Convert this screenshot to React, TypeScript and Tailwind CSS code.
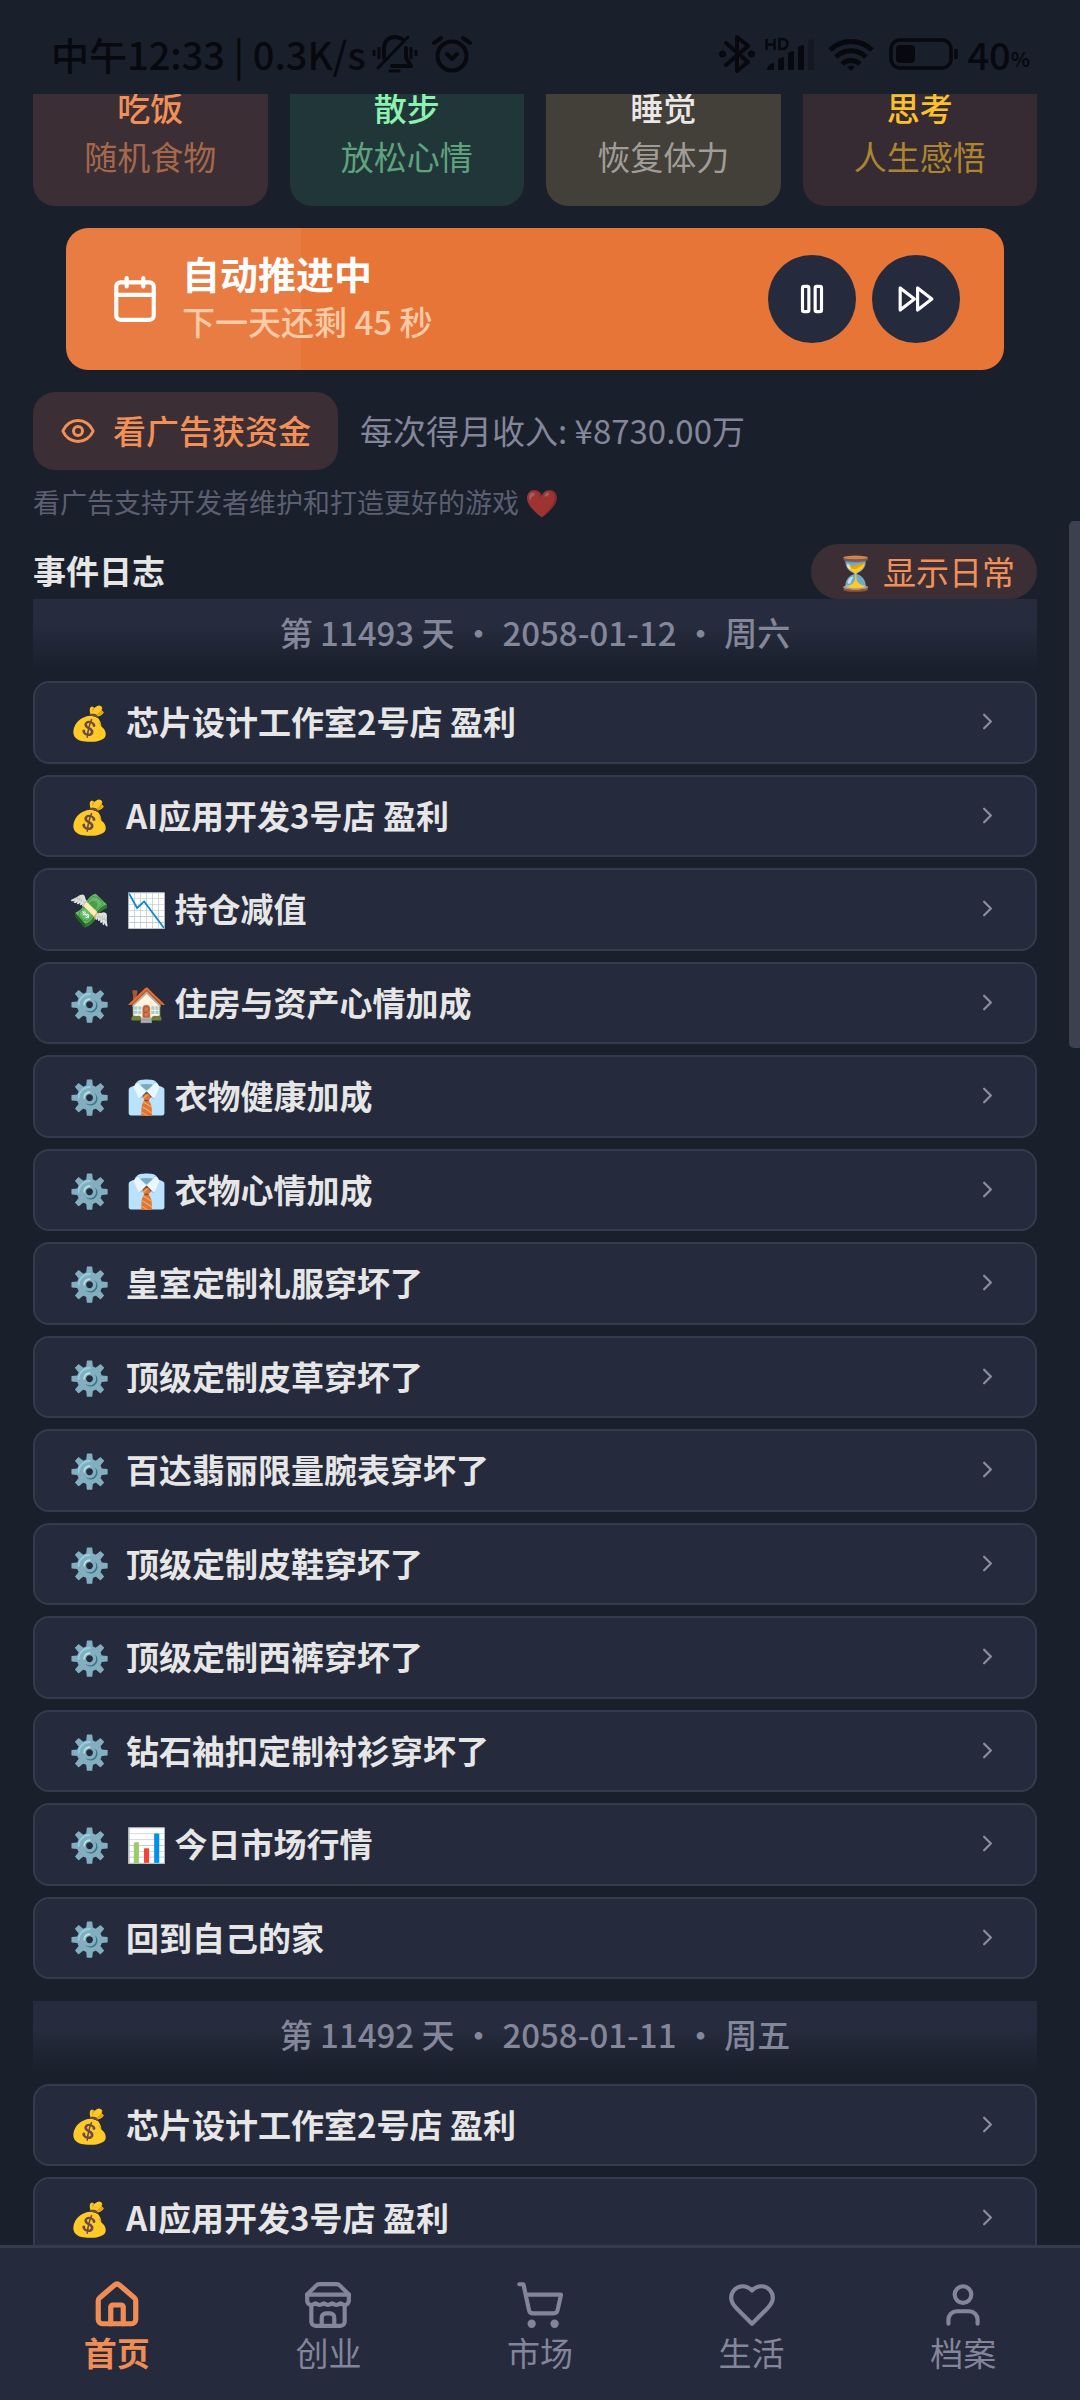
import { useState } from "react";
import { Calendar, ChevronRight, Eye } from "lucide-react";

const actions = [
  { title: "吃饭", hint: "随机食物", box: "bg-[#3b2e34] text-[#f29058]", sub: "text-[#a4694c]" },
  { title: "散步", hint: "放松心情", box: "bg-[#213639] text-[#8cf2b0]", sub: "text-[#5fa37d]" },
  { title: "睡觉", hint: "恢复体力", box: "bg-[#434039] text-[#ebe7e6]", sub: "text-[#a09d99]" },
  { title: "思考", hint: "人生感悟", box: "bg-[#362b32] text-[#fbc02d]", sub: "text-[#ab8530]" },
];

const days = [
  {
    label: "第 11493 天 • 2058-01-12 • 周六",
    events: [
      { icon: "💰", text: "芯片设计工作室2号店 盈利" },
      { icon: "💰", text: "AI应用开发3号店 盈利" },
      { icon: "💸", text: "📉 持仓减值" },
      { icon: "⚙️", text: "🏠 住房与资产心情加成" },
      { icon: "⚙️", text: "👔 衣物健康加成" },
      { icon: "⚙️", text: "👔 衣物心情加成" },
      { icon: "⚙️", text: "皇室定制礼服穿坏了" },
      { icon: "⚙️", text: "顶级定制皮草穿坏了" },
      { icon: "⚙️", text: "百达翡丽限量腕表穿坏了" },
      { icon: "⚙️", text: "顶级定制皮鞋穿坏了" },
      { icon: "⚙️", text: "顶级定制西裤穿坏了" },
      { icon: "⚙️", text: "钻石袖扣定制衬衫穿坏了" },
      { icon: "⚙️", text: "📊 今日市场行情" },
      { icon: "⚙️", text: "回到自己的家" },
    ],
  },
  {
    label: "第 11492 天 • 2058-01-11 • 周五",
    events: [
      { icon: "💰", text: "芯片设计工作室2号店 盈利" },
      { icon: "💰", text: "AI应用开发3号店 盈利" },
    ],
  },
];

const tabs = [
  {
    name: "首页",
    shape: (
      <>
        <path d="M15 21v-8a1 1 0 0 0-1-1h-4a1 1 0 0 0-1 1v8" />
        <path d="M3 10a2 2 0 0 1 .709-1.528l7-5.999a2 2 0 0 1 2.582 0l7 5.999A2 2 0 0 1 21 10v9a2 2 0 0 1-2 2H5a2 2 0 0 1-2-2z" />
      </>
    ),
  },
  {
    name: "创业",
    shape: (
      <>
        <path d="m2 7 4.41-4.41A2 2 0 0 1 7.83 2h8.34a2 2 0 0 1 1.42.59L22 7" />
        <path d="M4 12v8a2 2 0 0 0 2 2h12a2 2 0 0 0 2-2v-8" />
        <path d="M15 22v-4a2 2 0 0 0-2-2h-2a2 2 0 0 0-2 2v4" />
        <path d="M2 7h20" />
        <path d="M22 7v3a2 2 0 0 1-2 2a2.7 2.7 0 0 1-1.59-.63.7.7 0 0 0-.82 0A2.7 2.7 0 0 1 16 12a2.7 2.7 0 0 1-1.59-.63.7.7 0 0 0-.82 0A2.7 2.7 0 0 1 12 12a2.7 2.7 0 0 1-1.59-.63.7.7 0 0 0-.82 0A2.7 2.7 0 0 1 8 12a2.7 2.7 0 0 1-1.59-.63.7.7 0 0 0-.82 0A2.7 2.7 0 0 1 4 12a2 2 0 0 1-2-2V7" />
      </>
    ),
  },
  {
    name: "市场",
    shape: (
      <>
        <circle cx="8" cy="21" r="1" />
        <circle cx="19" cy="21" r="1" />
        <path d="M2.05 2.05h2l2.66 12.42a2 2 0 0 0 2 1.58h9.78a2 2 0 0 0 1.95-1.57l1.65-7.43H5.12" />
      </>
    ),
  },
  {
    name: "生活",
    shape: (
      <path d="M19 14c1.49-1.46 3-3.21 3-5.5A5.5 5.5 0 0 0 16.5 3c-1.76 0-3 .5-4.5 2-1.5-1.5-2.74-2-4.5-2A5.5 5.5 0 0 0 2 8.5c0 2.3 1.5 4.05 3 5.5l7 7Z" />
    ),
  },
  {
    name: "档案",
    shape: (
      <>
        <path d="M19 21v-2a4 4 0 0 0-4-4H9a4 4 0 0 0-4 4v2" />
        <circle cx="12" cy="7" r="4" />
      </>
    ),
  },
];

function StatusBar() {
  return (
    <header className="flex h-[94px] shrink-0 items-center justify-between pt-[13px] pr-[50px] pl-[51px] text-[38px] font-medium text-[#07090e]">
      <div className="flex items-center">
        <span className="mr-[6px] whitespace-nowrap">中午12:33 | 0.3K/s</span>
        {/* muted bell */}
        <svg className="mr-[14px] h-[40px] w-[46px]" viewBox="0 0 46 40" fill="none" stroke="currentColor" strokeWidth="4" strokeLinecap="round" strokeLinejoin="round">
          <path d="M12 24V14C12 7 17 3 23 3c3 0 5 1 7 2M34 14v10l5 8H20" />
          <path d="M36 3 6 34" strokeWidth="3" />
          <path d="M18 37h9" strokeWidth="3" />
          <path d="M2 16v6M7 13v12M39 13v12M44 16v6" strokeWidth="3" strokeLinecap="butt" />
        </svg>
        <svg className="h-[40px] w-[40px]" viewBox="0 0 40 40" fill="none" stroke="currentColor" strokeWidth="4" strokeLinecap="round" strokeLinejoin="round">
          <circle cx="20" cy="22" r="14.5" />
          <path d="m15 20 5 5 5-5M2 9l7-5M38 9l-7-5" />
        </svg>
      </div>
      <div className="flex items-center">
        <svg className="mr-[10px] h-[40px] w-[36px]" viewBox="0 0 36 40" fill="none" stroke="currentColor" strokeWidth="4" strokeLinejoin="round" strokeLinecap="round">
          <path d="m7 9 22 19-11 9V3l11 9L7 31" />
          <circle cx="3.5" cy="20" r="1.5" />
          <circle cx="32.5" cy="20" r="1.5" />
        </svg>
        {/* HD + signal */}
        <svg className="mr-[13px] h-[36px] w-[50px]" viewBox="0 0 50 36" fill="currentColor">
          <path d="M1.5 3v11M9.500 3v11M1.5 8.500h8M14.500 3v10h3a5 5 0 0 0 0-10z" fill="none" stroke="currentColor" strokeWidth="2.6" />
          <path d="M2 34q0-6 7-7v7zM13 34V24q0-2 6-3v13zM23 34V18q0-2 6-3v19zM33 34V12q0-2 6-3v25z" />
          <path d="M43 34V6q0-2 6-3v31z" opacity="0.3" />
        </svg>
        <svg className="mr-[15px] h-[36px] w-[46px]" viewBox="0 0 46 36" fill="none" stroke="currentColor" strokeWidth="5">
          <path d="M2 14a30 30 0 0 1 42 0M8 21a21 21 0 0 1 30 0M14 28a13 13 0 0 1 18 0" />
          <path d="M19 31a6 6 0 0 1 8 0l-4 4z" fill="currentColor" stroke="none" />
        </svg>
        <svg className="mr-[8px] h-[32px] w-[70px]" viewBox="0 0 70 32" fill="none" stroke="currentColor" strokeWidth="3.5">
          <rect x="2" y="2" width="60" height="28" rx="9" />
          <rect x="7" y="7" width="19" height="18" rx="4" fill="currentColor" stroke="none" />
          <path d="M67 11v10" />
        </svg>
        <span>40</span>
        <span className="pt-[10px] text-[20px] font-bold">%</span>
      </div>
    </header>
  );
}

export default function App() {
  const [activeTab, setActiveTab] = useState("首页");
  const [paused, setPaused] = useState(false);

  return (
    <div className="relative flex h-screen flex-col overflow-hidden bg-[#1a1f2c] font-['Noto_Sans_CJK_SC','Noto_Sans',sans-serif] text-[33px] leading-normal text-[#e6e6e6]">
      <StatusBar />

      <main className="min-h-0 flex-1 overflow-hidden pr-[43px] pl-[33px]">
        {/* quick actions, scrolled partly under the status bar */}
        <div className="-mt-[33px] grid grid-cols-4 gap-[22px]">
          {actions.map((a) => (
            <button key={a.title} className={`flex flex-col items-center rounded-[22px] pt-[22px] pb-[25px] leading-[49px] ${a.box}`}>
              <span className="font-medium">{a.title}</span>
              <span className={a.sub}>{a.hint}</span>
            </button>
          ))}
        </div>

        <section className="relative mx-[33px] mt-[22px] flex items-center overflow-hidden rounded-[22px] bg-[#e87538] px-[44px] py-[20px] text-white">
          <div className="absolute inset-y-0 left-0 w-1/4 bg-white/5" />
          <Calendar className="relative size-[50px]" />
          <div className="relative ml-[22px] flex-1 pb-[6px]">
            <h2 className="text-[38px] leading-[50px] font-bold">自动推进中</h2>
            <p className="leading-[46px] font-medium text-[#fbcba8]">下一天还剩 45 秒</p>
          </div>
          <div className="relative flex gap-[16px]">
            <button
              aria-label="暂停"
              className="flex size-[88px] items-center justify-center rounded-full bg-[#252a3c]"
              onClick={() => setPaused(!paused)}
            >
              <svg className="size-[38px]" viewBox="0 0 24 24" fill="none" stroke="currentColor" strokeWidth="2" strokeLinejoin="round">
                <rect x="6" y="4" width="4" height="16" rx="1" />
                <rect x="14" y="4" width="4" height="16" rx="1" />
              </svg>
            </button>
            <button aria-label="快进" className="flex size-[88px] items-center justify-center rounded-full bg-[#252a3c]">
              <svg className="size-[38px]" viewBox="0 0 24 24" fill="none" stroke="currentColor" strokeWidth="2" strokeLinejoin="round">
                <path d="m13 19 9-7-9-7zM2 19l9-7-9-7z" />
              </svg>
            </button>
          </div>
        </section>

        <div className="mt-[22px] flex items-center gap-[22px]">
          <button className="flex items-center gap-[17px] rounded-[22px] bg-[#3b2e34] px-[27px] py-[14px] font-medium text-[#f29058]">
            <Eye className="size-[36px]" />
            看广告获资金
          </button>
          <span className="text-[#84869a]">每次得月收入: ¥8730.00万</span>
        </div>
        <p className="mt-[11px] text-[27px] leading-[41px] text-[#5c5f71]">
          看广告支持开发者维护和打造更好的游戏 <span className="opacity-60">❤️</span>
        </p>

        <div className="mt-[22px] flex items-center justify-between">
          <h2 className="font-bold">事件日志</h2>
          <button className="rounded-full bg-[#3b2e34] pr-[22px] pl-[24px] leading-[55px] text-[#f29058]">⏳ 显示日常</button>
        </div>

        {days.map((day) => (
          <section key={day.label} className="mb-[22px]">
            <h3 className="mb-[11px] bg-linear-to-b from-[#262b3d] from-40% to-[#1a1f2c] pt-[9px] pb-[13px] text-center font-medium text-[#84869a]">
              {day.label}
            </h3>
            <ul className="flex flex-col gap-[11px]">
              {day.events.map((e) => (
                <li key={e.text}>
                  <button className="flex w-full items-center rounded-[16px] border-2 border-[#353b4b] bg-[#252a3c] px-[34px] pt-[14px] pb-[15px] text-left">
                    <span className="mr-[16px]">{e.icon}</span>
                    <span className="flex-1 font-bold">{e.text}</span>
                    <ChevronRight className="size-[27px] text-[#8a8ca0]" />
                  </button>
                </li>
              ))}
            </ul>
          </section>
        ))}
      </main>

      {/* scroll thumb */}
      <div className="absolute top-[521px] right-0 h-[527px] w-[11px] rounded-l-[5px] bg-[#3d404f]" />

      <nav className="relative grid shrink-0 grid-cols-5 border-t-3 border-[#353b4b] bg-[#252a3c] px-[11px] pt-[32px] pb-[25px] leading-[45px]">
        {tabs.map((tab) => {
          const active = tab.name === activeTab;
          return (
            <button
              key={tab.name}
              onClick={() => setActiveTab(tab.name)}
              className={`flex flex-col items-center ${active ? "font-bold text-[#f08d55]" : "text-[#84859b]"}`}
            >
              <svg
                className="size-[50px]"
                viewBox="0 0 24 24"
                fill="none"
                stroke="currentColor"
                strokeWidth={active ? 2.5 : 2}
                strokeLinecap="round"
                strokeLinejoin="round"
              >
                {tab.shape}
              </svg>
              {tab.name}
            </button>
          );
        })}
      </nav>
    </div>
  );
}
